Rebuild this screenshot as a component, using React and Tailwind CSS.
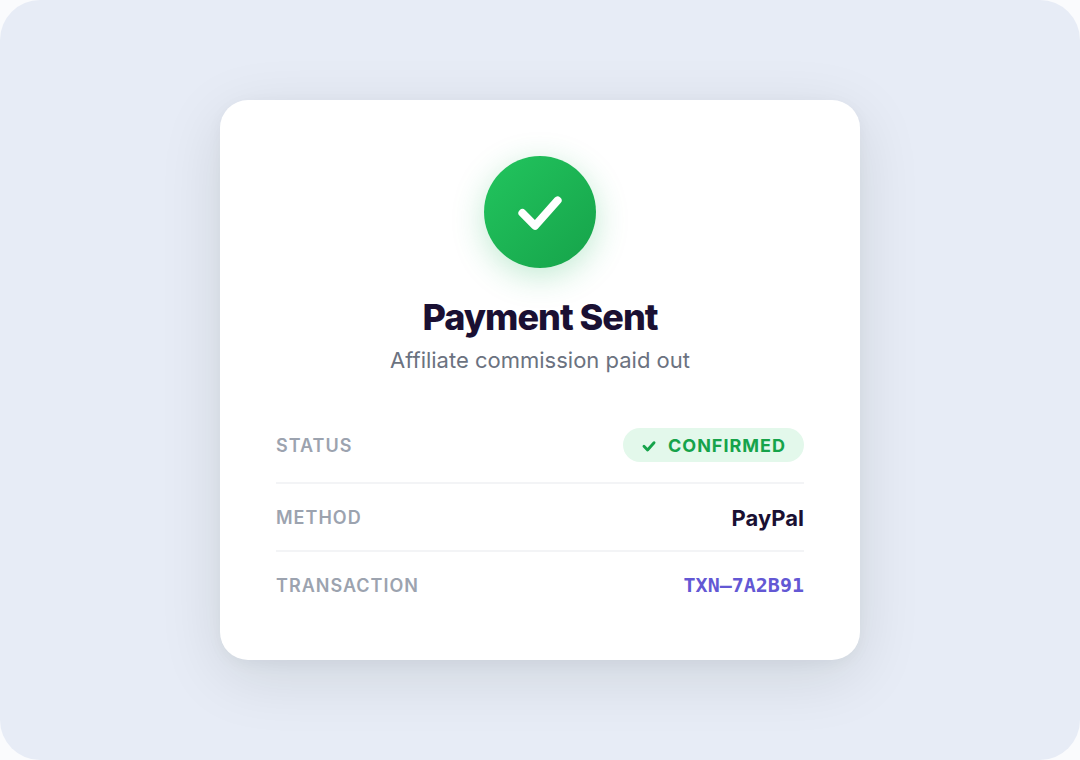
import React from 'react';

const CheckIcon = ({ className, strokeWidth = 8 }) => (
  <svg className={className} viewBox="0 0 56 56" fill="none" stroke="currentColor" strokeWidth={strokeWidth} strokeLinecap="round" strokeLinejoin="round" aria-hidden="true">
    <path d="M10.4 29L23 41.8L45.6 16.4" />
  </svg>
);

const DetailRow = ({ label, children }) => (
  <div className="flex items-center justify-between border-b-2 border-[#f3f4f6] py-5 last:border-b-0">
    <dt className="pt-0.5 text-[18px] leading-6 font-semibold tracking-[1px] text-[#9ca3af] uppercase">{label}</dt>
    <dd>{children}</dd>
  </div>
);

const App = () => {
  return (
    <div className="min-h-screen bg-[#fafbfd] font-['Inter',sans-serif]">
      <main className="flex min-h-screen items-center justify-center rounded-[40px] bg-[#e7ecf6] p-6">
        <section className="w-full max-w-[640px] rounded-[28px] bg-white px-14 pt-14 pb-[42px] shadow-[0_16px_64px_rgba(0,24,16,0.11),0_4px_16px_rgba(0,0,0,0.04)]">
          <div className="mx-auto flex size-28 items-center justify-center rounded-full bg-linear-to-br from-[#22c55e] to-[#16a34a] text-white shadow-[0_8px_32px_rgba(34,180,94,0.28)]">
            <CheckIcon className="size-14" />
          </div>

          <div className="mt-7 text-center">
            <h1 className="text-[36px] leading-[42px] font-extrabold tracking-[-1px] text-[#1a1033]">Payment Sent</h1>
            <p className="mt-1.5 text-[22px] leading-8 text-[#6b7280]">Affiliate commission paid out</p>
          </div>

          <dl className="mt-8">
            <DetailRow label="Status">
              <span className="flex items-center gap-[11px] rounded-full bg-[#e3f8eb] px-[18px] pt-1.5 pb-1 text-[18px] leading-6 font-bold tracking-[1px] text-[#16a34a] uppercase">
                <CheckIcon className="size-4" strokeWidth={10} />
                Confirmed
              </span>
            </DetailRow>
            <DetailRow label="Method">
              <span className="block pt-0.5 text-[22px] leading-6 font-bold text-[#1a1033]">PayPal</span>
            </DetailRow>
            <DetailRow label="Transaction">
              <span className="block font-['DejaVu_Sans_Mono',monospace] text-[20px] leading-[26px] font-bold text-[#6358d4]">TXN–7A2B91</span>
            </DetailRow>
          </dl>
        </section>
      </main>
    </div>
  );
};

export default App;
